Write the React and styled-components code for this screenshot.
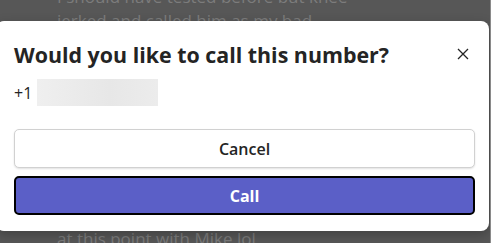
import React from 'react';
import styled, { createGlobalStyle } from 'styled-components';

const Global = createGlobalStyle`
  html, body { margin: 0; padding: 0; }
  body {
    width: 491px;
    height: 243px;
    overflow: hidden;
    background: #575757;
    font-family: "Segoe UI", "Open Sans", "Noto Sans", sans-serif;
  }
`;

const Backdrop = styled.div`
  position: relative;
  width: 491px;
  height: 243px;
  overflow: hidden;
  background: #575757;
  border-right: 1px solid #8a8a8a;
  box-sizing: border-box;
`;

const ChatText = styled.div`
  padding: 0 0 0 57px;
  color: #7c7c7c;
  font-size: 17px;
  line-height: 24px;
  white-space: nowrap;
  margin-top: ${p => p.top}px;
`;

const Dialog = styled.div`
  position: absolute;
  left: -4px;
  top: 21px;
  width: 493px;
  height: 210px;
  box-sizing: border-box;
  background: #fff;
  border-radius: 8px;
  padding: 18px 16px 0 18px;
  box-shadow: 0 4px 12px rgba(0, 0, 0, 0.25);
`;

const Header = styled.div`
  display: flex;
  align-items: center;
  justify-content: space-between;
  height: 30px;
`;

const Title = styled.h2`
  margin: 0;
  font-size: 21.4px;
  font-weight: 700;
  color: #242424;
  letter-spacing: 0;
`;

const Close = styled.button`
  border: none;
  background: none;
  padding: 0;
  width: 20px;
  height: 20px;
  display: flex;
  align-items: center;
  justify-content: center;
`;

const Number = styled.div`
  display: flex;
  align-items: center;
  margin-top: 10px;
  font-size: 16px;
  color: #242424;
`;

const Blur = styled.span`
  display: inline-block;
  width: 121px;
  height: 27px;
  margin-left: 5px;
  background: linear-gradient(90deg, #efefef, #e7e7e7 60%, #ececec);
`;

const Actions = styled.div`
  display: flex;
  flex-direction: column;
  gap: 8px;
  margin-top: 23px;
  width: 461px;
`;

const Button = styled.button`
  height: 39px;
  border-radius: 5px;
  font-family: inherit;
  font-size: 16px;
  cursor: pointer;
  border: ${p => (p.primary ? '2px solid #000' : '1px solid #d1d1d1')};
  background: ${p => (p.primary ? '#5b5fc7' : '#fff')};
  color: ${p => (p.primary ? '#fff' : '#242424')};
  font-weight: ${p => (p.primary ? 700 : 600)};
  box-shadow: ${p => (p.primary ? 'none' : '0 1px 2px rgba(0,0,0,0.12)')};
`;

export default function App() {
  return (
    <>
      <Global />
      <Backdrop>
        <ChatText top={-15}>I should have tested before but knee</ChatText>
        <ChatText top={0}>jerked and called him as my bad</ChatText>
        <ChatText top={194}>at this point with Mike lol</ChatText>
        <Dialog>
          <Header>
            <Title>Would you like to call this number?</Title>
            <Close aria-label="Close">
              <svg width="12" height="12" viewBox="0 0 12 12">
                <path d="M1 1 L11 11 M11 1 L1 11" stroke="#242424" strokeWidth="1.3" fill="none" />
              </svg>
            </Close>
          </Header>
          <Number>
            +1<Blur />
          </Number>
          <Actions>
            <Button>Cancel</Button>
            <Button primary>Call</Button>
          </Actions>
        </Dialog>
      </Backdrop>
    </>
  );
}
